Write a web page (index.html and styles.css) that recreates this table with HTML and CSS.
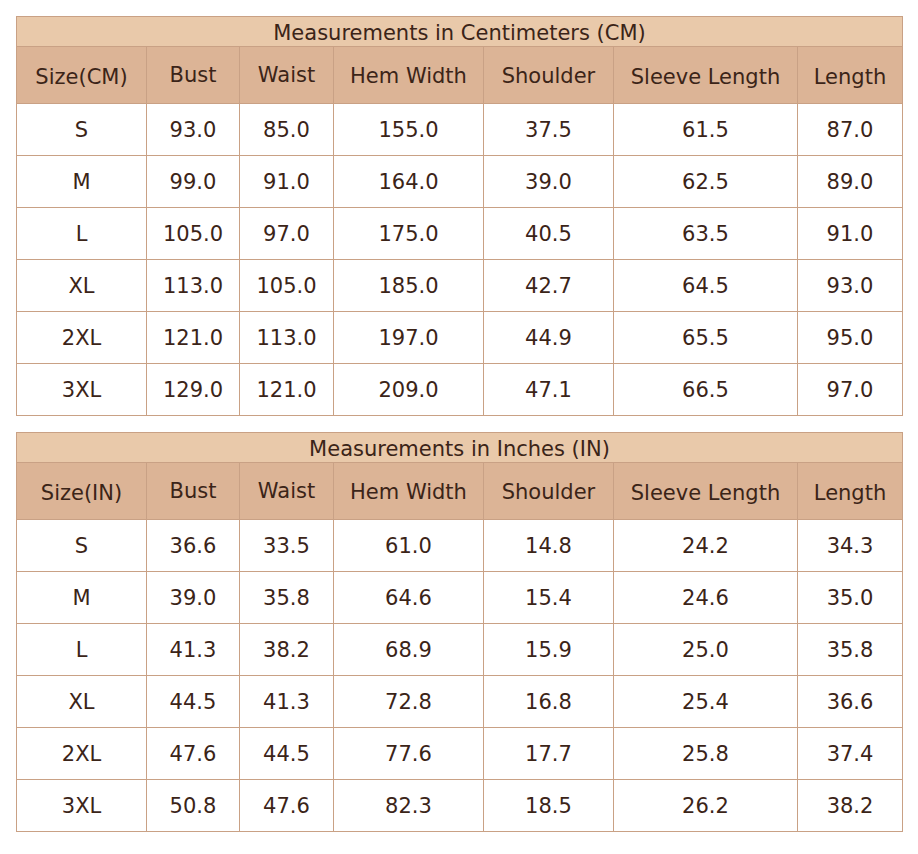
FILE: index.html
```html
<!DOCTYPE html>
<html>
<head>
<meta charset="utf-8">
<link rel="stylesheet" href="styles.css">
</head>
<body>
<table class="size-table">
  <colgroup>
    <col class="c1"><col class="c2"><col class="c3"><col class="c4"><col class="c5"><col class="c6"><col class="c7">
  </colgroup>
  <thead>
    <tr class="title"><th colspan="7">Measurements in Centimeters (CM)</th></tr>
    <tr class="head">
      <th class="lo">Size(CM)</th><th>Bust</th><th>Waist</th><th class="mid">Hem Width</th><th class="mid">Shoulder</th><th class="lo">Sleeve Length</th><th class="lo">Length</th>
    </tr>
  </thead>
  <tbody>
    <tr><td>S</td><td>93.0</td><td>85.0</td><td>155.0</td><td>37.5</td><td>61.5</td><td>87.0</td></tr>
    <tr><td>M</td><td>99.0</td><td>91.0</td><td>164.0</td><td>39.0</td><td>62.5</td><td>89.0</td></tr>
    <tr><td>L</td><td>105.0</td><td>97.0</td><td>175.0</td><td>40.5</td><td>63.5</td><td>91.0</td></tr>
    <tr><td>XL</td><td>113.0</td><td>105.0</td><td>185.0</td><td>42.7</td><td>64.5</td><td>93.0</td></tr>
    <tr><td>2XL</td><td>121.0</td><td>113.0</td><td>197.0</td><td>44.9</td><td>65.5</td><td>95.0</td></tr>
    <tr><td>3XL</td><td>129.0</td><td>121.0</td><td>209.0</td><td>47.1</td><td>66.5</td><td>97.0</td></tr>
  </tbody>
</table>
<table class="size-table">
  <colgroup>
    <col class="c1"><col class="c2"><col class="c3"><col class="c4"><col class="c5"><col class="c6"><col class="c7">
  </colgroup>
  <thead>
    <tr class="title"><th colspan="7">Measurements in Inches (IN)</th></tr>
    <tr class="head">
      <th class="lo">Size(IN)</th><th>Bust</th><th>Waist</th><th class="mid">Hem Width</th><th class="mid">Shoulder</th><th class="lo">Sleeve Length</th><th class="lo">Length</th>
    </tr>
  </thead>
  <tbody>
    <tr><td>S</td><td>36.6</td><td>33.5</td><td>61.0</td><td>14.8</td><td>24.2</td><td>34.3</td></tr>
    <tr><td>M</td><td>39.0</td><td>35.8</td><td>64.6</td><td>15.4</td><td>24.6</td><td>35.0</td></tr>
    <tr><td>L</td><td>41.3</td><td>38.2</td><td>68.9</td><td>15.9</td><td>25.0</td><td>35.8</td></tr>
    <tr><td>XL</td><td>44.5</td><td>41.3</td><td>72.8</td><td>16.8</td><td>25.4</td><td>36.6</td></tr>
    <tr><td>2XL</td><td>47.6</td><td>44.5</td><td>77.6</td><td>17.7</td><td>25.8</td><td>37.4</td></tr>
    <tr><td>3XL</td><td>50.8</td><td>47.6</td><td>82.3</td><td>18.5</td><td>26.2</td><td>38.2</td></tr>
  </tbody>
</table>
</body>
</html>
```
FILE: styles.css
```css
html, body {
  margin: 0;
  padding: 0;
  background: #ffffff;
}
body {
  padding: 16px;
  font-family: "DejaVu Sans", Verdana, sans-serif;
  color: #3b2418;
}
.size-table {
  width: 886px;
  border-collapse: collapse;
  table-layout: fixed;
  margin-bottom: 16px;
  font-size: 21px;
}
.size-table th,
.size-table td {
  border: 1px solid #c9a185;
  padding: 0;
  text-align: center;
  font-weight: normal;
  vertical-align: middle;
}
.c1 { width: 130px; }
.c2 { width: 93px; }
.c3 { width: 94px; }
.c4 { width: 150px; }
.c5 { width: 130px; }
.c6 { width: 184px; }
.c7 { width: 105px; }
.title th {
  background: #e9c9aa;
  height: 25px;
  line-height: 25px;
  padding-top: 4px;
}
.head th {
  background: #dcb496;
  height: 56px;
  line-height: 24px;
  padding-bottom: 0;
}
.head th.mid {
  height: 55px;
  padding-top: 1px;
}
.head th.lo {
  height: 52px;
  padding-top: 4px;
}
.size-table td {
  height: 51px;
  line-height: 24px;
}
```
